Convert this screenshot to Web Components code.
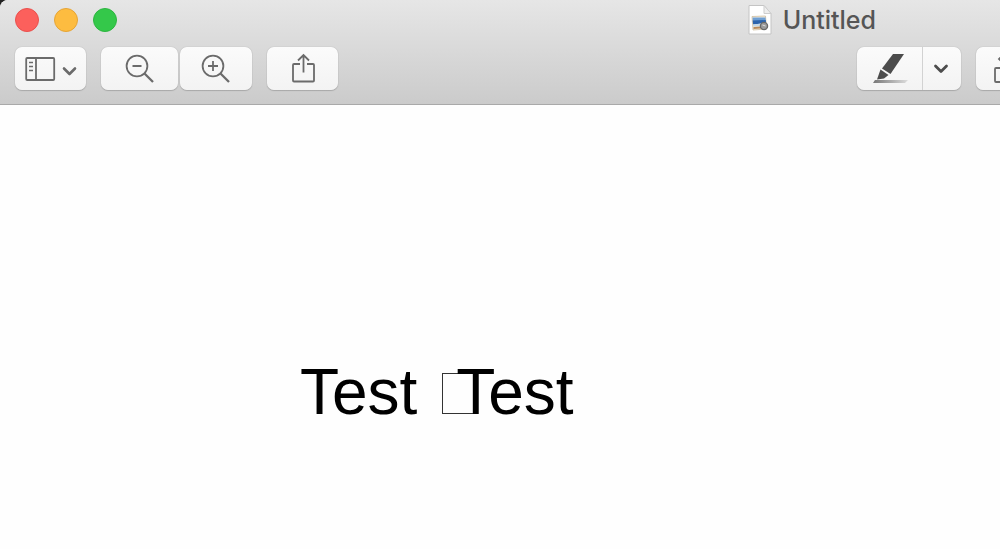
<!DOCTYPE html>
<html lang="en">
<head>
<meta charset="utf-8">
<title>Untitled</title>
<style>
  html, body {
    height: 100%;
    margin: 0;
  }
  body {
    background: #222;
    overflow: hidden;
  }
</style>
</head>
<body>
<preview-window>
  <title-bar slot="title">Untitled</title-bar>
  <tool-bar slot="tools">
    <tool-button label="Sidebar" size="small">
      <svg width="52" height="26" viewBox="0 0 52 26" fill="none" stroke="#6b6b6b" stroke-width="1.8">
        <rect x="1.2" y="2" width="28" height="22" rx="1"/>
        <path d="M11 2v22"/>
        <path d="M4 6.500h4M4 10.500h4M4 14.500h4" stroke-width="1.300"/>
        <path d="M39 12.500l5.500 5.500 5.500-5.500" stroke-width="2.600" stroke-linecap="round" stroke-linejoin="round"/>
      </svg>
    </tool-button>
    <button-pair>
      <tool-button label="Zoom out" size="large">
        <svg width="30" height="30" viewBox="0 0 30 30" fill="none" stroke="#6b6b6b" stroke-width="1.8">
          <circle cx="12" cy="12" r="10.400"/>
          <path d="M7.500 12h9"/>
          <path d="M19.500 19.500l8.500 8.500" stroke-width="2.300"/>
        </svg>
      </tool-button>
      <tool-button label="Zoom in">
        <svg width="30" height="30" viewBox="0 0 30 30" fill="none" stroke="#6b6b6b" stroke-width="1.8">
          <circle cx="12" cy="12" r="10.400"/>
          <path d="M7 12h10M12 7v10"/>
          <path d="M19.500 19.500l8.500 8.500" stroke-width="2.300"/>
        </svg>
      </tool-button>
    </button-pair>
    <tool-button label="Share" size="small">
      <svg width="24" height="32" viewBox="0 0 24 32" fill="none" stroke="#6b6b6b" stroke-width="1.8">
        <path d="M9 11H3q-1 0-1 1v15.500q0 1 1 1h19q1 0 1-1V12q0-1-1-1h-6"/>
        <path d="M12.500 19.500V2M7 7.500L12.500 2l5.500 5.500"/>
      </svg>
    </tool-button>
    <split-button slot="end"></split-button>
    <tool-button slot="end" label="Rotate" size="small">
      <svg width="36" height="36" viewBox="0 0 36 36" fill="none" stroke="#6b6b6b" stroke-width="1.8">
        <rect x="1" y="17" width="26" height="14" rx="1"/>
        <path d="M9 4L5 8l4 4M5 8h10a8 8 0 0 1 8 6"/>
      </svg>
    </tool-button>
  </tool-bar>
  <document-page>
    <span>Test </span><glyph-box></glyph-box><span>Test</span>
  </document-page>
</preview-window>

<script type="module">
  class PreviewWindow extends HTMLElement {
    constructor() {
      super();
      this.attachShadow({ mode: 'open' });
      this.shadowRoot.innerHTML = `
        <style>
          :host {
            display: flex;
            flex-direction: column;
            min-height: 100%;
            overflow: hidden;
            border-top-left-radius: 8px;
            background: #fefefe;
          }
          header {
            background: linear-gradient(#e6e6e6, #cbcbcb);
            border-bottom: 1px solid #a9a9a9;
            padding-bottom: 14px;
          }
          main {
            flex: 1;
          }
        </style>
        <header>
          <slot name="title"></slot>
          <slot name="tools"></slot>
        </header>
        <main><slot></slot></main>
      `;
    }
  }

  class TitleBar extends HTMLElement {
    constructor() {
      super();
      this.attachShadow({ mode: 'open' });
      this.shadowRoot.innerHTML = `
        <style>
          :host {
            display: flex;
            justify-content: space-between;
            align-items: center;
            height: 40px;
            margin-bottom: 7px;
            padding: 0 124px 0 15px;
            color: #555;
            font-family: Inter, sans-serif;
            font-size: 25px;
            font-weight: 500;
          }
          .lights, .title {
            display: flex;
            align-items: center;
          }
          .lights {
            gap: 15px;
          }
          .lights button {
            box-sizing: border-box;
            width: 24px;
            height: 24px;
            padding: 0;
            border: 1px solid var(--edge);
            border-radius: 50%;
          }
          .close { background: #fc605c; --edge: #e9504d; }
          .minimize { background: #fdbc40; --edge: #e5a436; }
          .zoom { background: #34c84a; --edge: #2db540; }
          .title {
            gap: 11px;
          }
          h1 {
            margin: 0;
            font: inherit;
          }
        </style>
        <div class="lights">
          <button class="close" aria-label="Close"></button>
          <button class="minimize" aria-label="Minimize"></button>
          <button class="zoom" aria-label="Zoom"></button>
        </div>
        <div class="title">
          <svg width="24" height="30" viewBox="0 0 24 30">
            <path d="M1 .5h15l7 8v20.500H1z" fill="#fff" stroke="#c4c4c4"/>
            <path d="M16 .5v8h7z" fill="#eee" stroke="#cdcdcd"/>
            <path d="M4 11.500l13.500-.5 1 13-13.500 1z" fill="#f4efe4" stroke="#c9b591" stroke-width=".7"/>
            <path d="M4.500 12.500h13l.5 5-13 1z" fill="#6f9fd3"/>
            <path d="M4.700 15.500l13-.5.4 3-13 1.500z" fill="#2c64ad"/>
            <path d="M5 19.500l13-1.500.2 2.500-13 1z" fill="#c5d8e6"/>
            <path d="M5.500 22l12.500-1v2l-12.500 1z" fill="#b98b5c"/>
            <circle cx="16" cy="21" r="3.600" fill="#9a9a9a" stroke="#686868" stroke-width="1.300"/>
            <path d="M14.500 20l3 1" stroke="#ddd"/>
          </svg>
          <h1><slot></slot></h1>
        </div>
      `;
    }
  }

  class ToolBar extends HTMLElement {
    constructor() {
      super();
      this.attachShadow({ mode: 'open' });
      this.shadowRoot.innerHTML = `
        <style>
          :host {
            display: flex;
            justify-content: space-between;
            padding-left: 15px;
          }
          .group {
            display: flex;
            gap: 15px;
          }
          /* the last tool runs past the right edge of the window */
          .end {
            margin-right: -47px;
          }
        </style>
        <div class="group"><slot></slot></div>
        <div class="group end"><slot name="end"></slot></div>
      `;
    }
  }

  class ButtonPair extends HTMLElement {
    constructor() {
      super();
      this.attachShadow({ mode: 'open' });
      this.shadowRoot.innerHTML = `
        <style>
          :host {
            display: flex;
            gap: 2px;
          }
        </style>
        <slot></slot>
      `;
    }
  }

  const buttonStyle = `
    button {
      display: flex;
      align-items: center;
      justify-content: center;
      height: 43px;
      margin: 0;
      padding: 0;
      border: 0;
      background: linear-gradient(#fbfbfb, #f3f3f3);
    }
  `;

  class ToolButton extends HTMLElement {
    constructor() {
      super();
      this.attachShadow({ mode: 'open' });
      this.shadowRoot.innerHTML = `
        <style>
          ${buttonStyle}
          :host {
            display: block;
          }
          button {
            width: 72px;
            border-radius: 7px;
            box-shadow: 0 0 1px #999, 0 1px 1px #aaa;
          }
          :host([size="small"]) button {
            width: 71px;
          }
          :host([size="large"]) button {
            width: 77px;
          }
        </style>
        <button><slot></slot></button>
      `;
      this.shadowRoot.querySelector('button').setAttribute('aria-label', this.getAttribute('label'));
    }
  }

  class SplitButton extends HTMLElement {
    constructor() {
      super();
      this.attachShadow({ mode: 'open' });
      this.shadowRoot.innerHTML = `
        <style>
          ${buttonStyle}
          :host {
            display: flex;
            border-radius: 7px;
            overflow: hidden;
            box-shadow: 0 0 1px #999, 0 1px 1px #aaa;
          }
          .main {
            width: 65px;
          }
          .menu {
            width: 39px;
            padding-right: 3px;
            border-left: 1px solid #d2d2d2;
          }
        </style>
        <button class="main" aria-label="Highlight">
          <svg width="36" height="32" viewBox="0 0 36 32">
            <defs>
              <linearGradient id="ink">
                <stop offset="0" stop-color="#777"/>
                <stop offset="1" stop-color="#ddd"/>
              </linearGradient>
            </defs>
            <path d="M21 1h11L18.500 21 10 15.500z" fill="#4c4c4c"/>
            <path d="M8.500 16.500l8 5.500-4.500 3.500-7 1z" fill="#4c4c4c"/>
            <path d="M3 27h33l-3 3H1z" fill="url(#ink)"/>
          </svg>
        </button>
        <button class="menu" aria-label="Highlight colors">
          <svg width="16" height="12" viewBox="0 0 16 12" fill="none" stroke="#4c4c4c" stroke-width="2.800" stroke-linecap="round" stroke-linejoin="round">
            <path d="M2.500 3L8 8.500 13.500 3"/>
          </svg>
        </button>
      `;
    }
  }

  class DocumentPage extends HTMLElement {
    constructor() {
      super();
      this.attachShadow({ mode: 'open' });
      this.shadowRoot.innerHTML = `
        <style>
          :host {
            display: block;
            padding: 251px 0 0 300px;
            color: #000;
            font-family: "Liberation Sans", Arial, sans-serif;
            font-size: 64px;
            line-height: 72px;
            white-space: nowrap;
          }
        </style>
        <slot></slot>
      `;
      this.normalize();
    }
  }

  // Empty box drawn for a character the font does not have
  class GlyphBox extends HTMLElement {
    constructor() {
      super();
      this.attachShadow({ mode: 'open' });
      this.shadowRoot.innerHTML = `
        <style>
          :host {
            display: inline-block;
            box-sizing: border-box;
            width: 32px;
            height: 41px;
            margin: 0 -18px 0 7px;
            border: 1px solid #333;
          }
        </style>
      `;
    }
  }

  customElements.define('preview-window', PreviewWindow);
  customElements.define('title-bar', TitleBar);
  customElements.define('tool-bar', ToolBar);
  customElements.define('button-pair', ButtonPair);
  customElements.define('tool-button', ToolButton);
  customElements.define('split-button', SplitButton);
  customElements.define('document-page', DocumentPage);
  customElements.define('glyph-box', GlyphBox);
</script>
</body>
</html>
